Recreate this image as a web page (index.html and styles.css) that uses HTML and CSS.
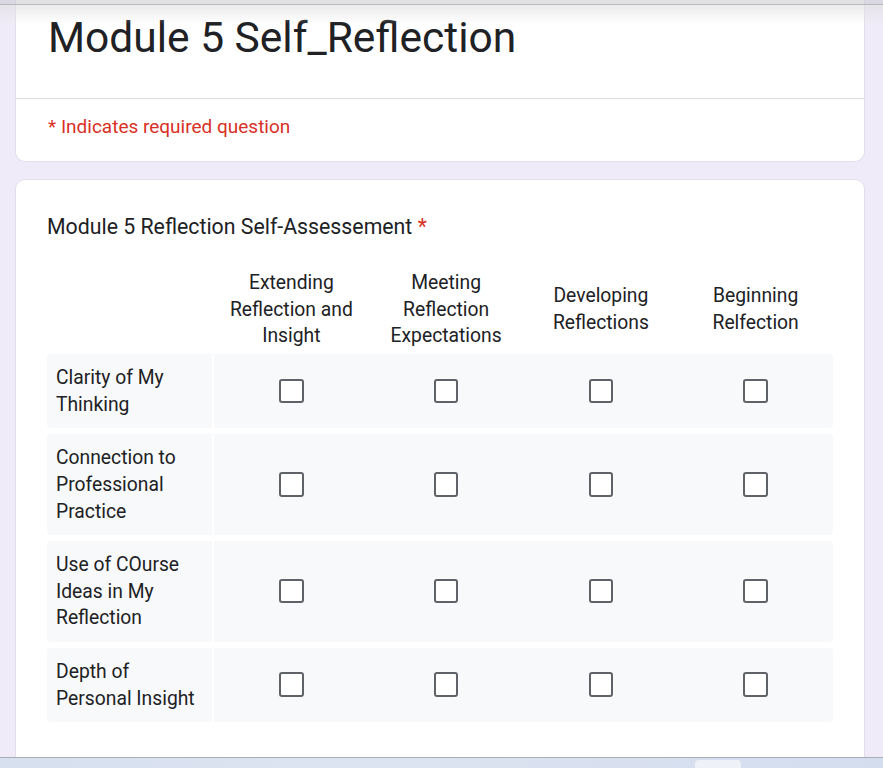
FILE: index.html
```html
<!DOCTYPE html>
<html lang="en">
<head>
    <meta charset="UTF-8">
    <meta name="viewport" content="width=device-width, initial-scale=1.0">
    <title>Module 5 Self_Reflection</title>
    <link rel="stylesheet" href="styles.css">
</head>
<body>
    <div class="form-page">
        <div class="card title-card">
            <div class="title-area">
                <h1>Module 5 Self_Reflection</h1>
            </div>
            <div class="required-note">* Indicates required question</div>
        </div>

        <div class="card question-card">
            <div class="question-title">Module 5 Reflection Self-Assessement <span class="req">*</span></div>

            <div class="grid">
                <div class="grid-head">
                    <div class="head-spacer"></div>
                    <div class="head-cols">
                        <div class="col-label">Extending Reflection and Insight</div>
                        <div class="col-label">Meeting Reflection Expectations</div>
                        <div class="col-label">Developing Reflections</div>
                        <div class="col-label">Beginning Relfection</div>
                    </div>
                </div>

                <div class="grid-row">
                    <div class="row-label">Clarity of My Thinking</div>
                    <div class="row-options">
                        <span class="box"></span>
                        <span class="box"></span>
                        <span class="box"></span>
                        <span class="box"></span>
                    </div>
                </div>

                <div class="grid-row">
                    <div class="row-label">Connection to Professional Practice</div>
                    <div class="row-options">
                        <span class="box"></span>
                        <span class="box"></span>
                        <span class="box"></span>
                        <span class="box"></span>
                    </div>
                </div>

                <div class="grid-row">
                    <div class="row-label">Use of COurse Ideas in My Reflection</div>
                    <div class="row-options">
                        <span class="box"></span>
                        <span class="box"></span>
                        <span class="box"></span>
                        <span class="box"></span>
                    </div>
                </div>

                <div class="grid-row">
                    <div class="row-label">Depth of Personal Insight</div>
                    <div class="row-options">
                        <span class="box"></span>
                        <span class="box"></span>
                        <span class="box"></span>
                        <span class="box"></span>
                    </div>
                </div>
            </div>
        </div>
    </div>

    <!-- overlays from the browser / screen edges -->
    <div class="top-shade"></div>
    <div class="taskbar">
        <span class="task-btn"></span>
    </div>
</body>
</html>
```

FILE: styles.css
```css
body {
    margin: 0;
    background: #f0ebf8;
    font-family: 'Roboto', 'Liberation Sans', sans-serif;
    color: #202124;
}

.form-page {
    width: 850px;
    margin: 0 0 0 15px;
}

.card {
    background: white;
    border: 1px solid #e3dfe8;
    border-radius: 10px;
}

.title-card {
    border-top: none;
    border-radius: 0 0 10px 10px;
}

.title-area {
    padding: 13px 32px 35px;
    border-bottom: 1px solid #dadce0;
}

h1 {
    margin: 0;
    font-size: 42.5px;
    font-weight: 400;
    line-height: 50px;
}

.required-note {
    padding: 16px 32px 22px;
    font-size: 19px;
    line-height: 24px;
    color: #d93025;
}

.question-card {
    margin-top: 17px;
    padding: 33px 31px 40px;
}

.question-title {
    font-size: 21.3px;
    line-height: 28px;
}

.req {
    color: #d93025;
}

.grid {
    margin-top: 29px;
    font-size: 19.3px;
    line-height: 26.6px;
}

.grid-head,
.grid-row {
    display: grid;
    grid-template-columns: 165px 1fr;
    gap: 2px;
}

.head-cols,
.row-options {
    display: grid;
    grid-template-columns: repeat(4, 1fr);
    align-items: center;
    justify-items: center;
}

.head-cols {
    padding-bottom: 4px;
}

.col-label {
    padding: 0 10px;
    text-align: center;
}

.grid-row {
    margin-bottom: 6px;
}

.row-label {
    padding: 11.5px 10px 9.5px 9px;
    background: #f8f9fa;
    border-radius: 4px 0 0 4px;
}

.row-options {
    background: #f8f9fa;
    border-radius: 0 4px 4px 0;
}

.box {
    width: 20.5px;
    height: 20.5px;
    border: 2.7px solid #5f6368;
    border-radius: 3px;
    background: white;
}

.top-shade {
    position: fixed;
    top: 0;
    left: 0;
    right: 0;
    height: 24px;
    background: linear-gradient(to bottom,
        rgba(200, 200, 206, 0.55) 0,
        rgba(200, 200, 206, 0.55) 4px,
        rgba(170, 170, 176, 0.8) 4px,
        rgba(170, 170, 176, 0.8) 5px,
        rgba(225, 225, 228, 0.7) 5px,
        rgba(255, 255, 255, 0) 24px);
}

.taskbar {
    position: fixed;
    left: 0;
    right: 0;
    bottom: 0;
    height: 10px;
    border-top: 1px solid #a9adb5;
    background: linear-gradient(to right, #d6e0ef, #dde4f1 40%, #d3ddee);
}

.task-btn {
    position: absolute;
    left: 695px;
    top: 2px;
    width: 46px;
    height: 10px;
    background: #eef1f7;
    border-radius: 4px 4px 0 0;
}
```
